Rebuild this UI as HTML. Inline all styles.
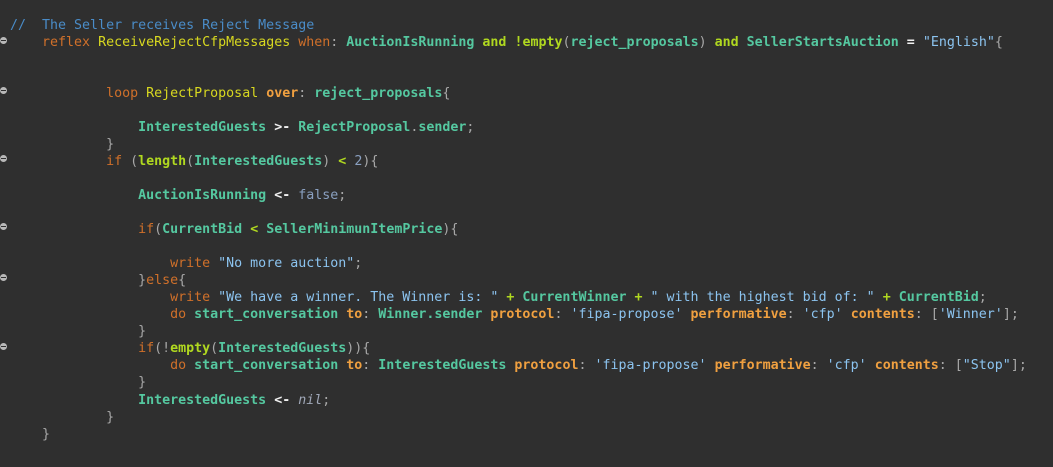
<!DOCTYPE html>
<html><head><meta charset="utf-8"><style>
html,body{margin:0;padding:0;background:#2f2f2f;width:1053px;height:467px;overflow:hidden}
pre{margin:0;position:absolute;left:10px;top:16.5px;font-family:"DejaVu Sans Mono","Liberation Mono",monospace;font-size:13.3px;line-height:17.04px;color:#a8a8a8}
.c{color:#4a8cc8}.k{color:#d0702a}.n{color:#d8d820}.b{color:#f0a040;font-weight:bold}
.v{color:#55c8a0;font-weight:bold}.g{color:#b0d820;font-weight:bold}.s{color:#8cc4f0}
.f{color:#8aa0c0}.i{color:#a0a8b8;font-style:italic}.w{color:#f0f0f0;font-weight:bold}.p{color:#a8a8a8}
.m{position:absolute;left:0;width:7px;height:7px;border-radius:50%;background:#b8b8b8}
.m:after{content:"";position:absolute;left:1px;right:1px;top:3px;height:1px;background:#2f2f2f}
</style></head><body>
<div class="m" style="top:37px"></div>
<div class="m" style="top:87px"></div>
<div class="m" style="top:155px"></div>
<div class="m" style="top:223px"></div>
<div class="m" style="top:274px"></div>
<div class="m" style="top:343px"></div>
<pre><span class="c">//  The Seller receives Reject Message</span>
    <span class="k">reflex</span> <span class="n">ReceiveRejectCfpMessages</span> <span class="k">when</span>: <span class="v">AuctionIsRunning</span> <span class="g">and</span> <span class="g">!empty</span>(<span class="v">reject_proposals</span>) <span class="g">and</span> <span class="v">SellerStartsAuction</span> <span class="w">=</span> <span class="s">"English"</span>{


            <span class="k">loop</span> <span class="n">RejectProposal</span> <span class="b">over</span>: <span class="v">reject_proposals</span>{

                <span class="v">InterestedGuests</span> <span class="w">&gt;-</span> <span class="v">RejectProposal</span>.<span class="v">sender</span>;
            }
            <span class="k">if</span> (<span class="g">length</span>(<span class="v">InterestedGuests</span>) <span class="g">&lt;</span> <span class="f">2</span>){

                <span class="v">AuctionIsRunning</span> <span class="w">&lt;-</span> <span class="f">false</span>;

                <span class="k">if</span>(<span class="v">CurrentBid</span> <span class="g">&lt;</span> <span class="v">SellerMinimunItemPrice</span>){

                    <span class="k">write</span> <span class="s">"No more auction"</span>;
                }<span class="k">else</span>{
                    <span class="k">write</span> <span class="s">"We have a winner. The Winner is: "</span> <span class="g">+</span> <span class="v">CurrentWinner</span> <span class="g">+</span> <span class="s">" with the highest bid of: "</span> <span class="g">+</span> <span class="v">CurrentBid</span>;
                    <span class="k">do</span> <span class="v">start_conversation</span> <span class="b">to</span>: <span class="v">Winner.sender</span> <span class="b">protocol</span>: <span class="s">'fipa-propose'</span> <span class="b">performative</span>: <span class="s">'cfp'</span> <span class="b">contents</span>: [<span class="s">'Winner'</span>];
                }
                <span class="k">if</span>(!<span class="g">empty</span>(<span class="v">InterestedGuests</span>)){
                    <span class="k">do</span> <span class="v">start_conversation</span> <span class="b">to</span>: <span class="v">InterestedGuests</span> <span class="b">protocol</span>: <span class="s">'fipa-propose'</span> <span class="b">performative</span>: <span class="s">'cfp'</span> <span class="b">contents</span>: [<span class="s">"Stop"</span>];
                }
                <span class="v">InterestedGuests</span> <span class="w">&lt;-</span> <span class="i">nil</span>;
            }
    }</pre>
</body></html>
